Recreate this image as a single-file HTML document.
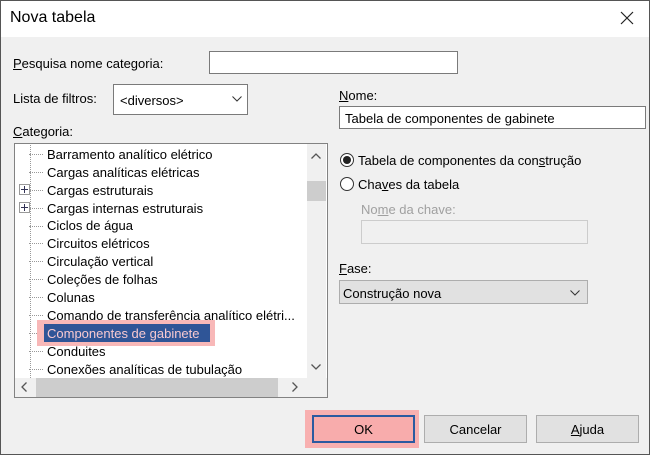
<!DOCTYPE html>
<html><head><meta charset="utf-8"><style>
*{box-sizing:border-box;margin:0;padding:0}
body{width:650px;height:455px;overflow:hidden;font-family:"Liberation Sans",sans-serif;font-size:13px;color:#000;background:#f0f0f0;position:relative}
.win{position:absolute;left:0;top:0;width:650px;height:455px;background:#f0f0f0}
.frame{position:absolute;left:0;top:0;width:650px;height:455px;border:1px solid #555;z-index:9}
.title{position:absolute;left:0;top:0;width:650px;height:37px;background:#fff}
.abs{position:absolute;white-space:nowrap}
.inp{position:absolute;background:#fff;border:1px solid #7a7a7a}
u{text-decoration:underline}
.row{position:absolute;left:47px;height:18px;line-height:18px;font-size:13px}
.dot{position:absolute;left:29px;width:14px;border-top:1px dotted #999}
.plus{position:absolute;left:19px;width:11px;height:11px;border:1px solid #999;background:#fff}
.plus:before{content:"";position:absolute;left:1px;top:4px;width:7px;height:1px;background:#335}
.plus:after{content:"";position:absolute;left:4px;top:1px;width:1px;height:7px;background:#335}
.btn{position:absolute;top:415px;height:28px;border:1px solid #adadad;background:#e1e1e1;text-align:center;line-height:27px;font-size:13px}
.radio{position:absolute;width:14px;height:14px;border-radius:50%;border:1px solid #333;background:#fff}
</style></head><body>
<div class="win">
<div class="title"></div>
<div class="abs" style="left:10px;top:9px;font-size:16px">Nova tabela</div>
<svg class="abs" style="left:620px;top:11px" width="14" height="14"><path d="M1 1L13 13M13 1L1 13" stroke="#222" stroke-width="1.2"/></svg>

<div class="abs" style="left:13px;top:56px"><u>P</u>esquisa nome categoria:</div>
<div class="inp" style="left:209px;top:51px;width:249px;height:23px"></div>
<div class="abs" style="left:13px;top:91px">Lista de filtros:</div>
<div class="inp" style="left:113px;top:84px;width:135px;height:31px"></div>
<div class="abs" style="left:120px;top:93px">&lt;diversos&gt;</div>
<svg class="abs" style="left:232px;top:96px" width="10" height="6"><path d="M0.5 0.5L5 5L9.5 0.5" stroke="#333" fill="none"/></svg>
<div class="abs" style="left:13px;top:124px"><u>C</u>ategoria:</div>

<div class="inp" style="left:14px;top:143px;width:314px;height:255px;border-color:#828282"></div>
<div class="abs" style="left:30px;top:145px;width:0;height:233px;border-left:1px dotted #999"></div>
<div class="dot" style="top:154px"></div><div class="row" style="top:146px">Barramento analítico elétrico</div>
<div class="dot" style="top:172px"></div><div class="row" style="top:164px">Cargas analíticas elétricas</div>
<div class="dot" style="top:190px"></div><div class="plus" style="top:184px"></div><div class="row" style="top:182px">Cargas estruturais</div>
<div class="dot" style="top:208px"></div><div class="plus" style="top:202px"></div><div class="row" style="top:200px">Cargas internas estruturais</div>
<div class="dot" style="top:226px"></div><div class="row" style="top:217px">Ciclos de água</div>
<div class="dot" style="top:243px"></div><div class="row" style="top:235px">Circuitos elétricos</div>
<div class="dot" style="top:261px"></div><div class="row" style="top:253px">Circulação vertical</div>
<div class="dot" style="top:279px"></div><div class="row" style="top:271px">Coleções de folhas</div>
<div class="dot" style="top:297px"></div><div class="row" style="top:289px">Colunas</div>
<div class="dot" style="top:315px"></div><div class="row" style="top:307px">Comando de transferência analítico elétri...</div>
<div class="dot" style="top:333px"></div>
<div class="abs" style="left:37px;top:320px;width:178px;height:26px;background:#f8b8b8"></div>
<div class="abs" style="left:44px;top:324px;width:166px;height:18px;background:#2f5597"></div>
<div class="row" style="top:325px;color:#f7c9d0">Componentes de gabinete</div>
<div class="dot" style="top:351px"></div><div class="row" style="top:343px">Conduites</div>
<div class="dot" style="top:369px"></div><div class="row" style="top:361px">Conexões analíticas de tubulação</div>

<div class="abs" style="left:307px;top:144px;width:19px;height:234px;background:#f0f0f0"></div>
<div class="abs" style="left:307px;top:181px;width:19px;height:20px;background:#cdcdcd"></div>
<svg class="abs" style="left:311px;top:153px" width="10" height="6"><path d="M0.5 5.5L5 1L9.5 5.5" stroke="#555" fill="none" stroke-width="1.3"/></svg>
<svg class="abs" style="left:311px;top:364px" width="10" height="6"><path d="M0.5 0.5L5 5L9.5 0.5" stroke="#555" fill="none" stroke-width="1.3"/></svg>
<div class="abs" style="left:15px;top:378px;width:292px;height:19px;background:#f0f0f0"></div>
<div class="abs" style="left:36px;top:378px;width:242px;height:19px;background:#cdcdcd"></div>
<div class="abs" style="left:307px;top:378px;width:20px;height:19px;background:#f0f0f0"></div>
<svg class="abs" style="left:21px;top:382px" width="6" height="10"><path d="M5.5 0.5L1 5L5.5 9.5" stroke="#555" fill="none" stroke-width="1.3"/></svg>
<svg class="abs" style="left:292px;top:382px" width="6" height="10"><path d="M0.5 0.5L5 5L0.5 9.5" stroke="#555" fill="none" stroke-width="1.3"/></svg>

<div class="abs" style="left:339px;top:88px"><u>N</u>ome:</div>
<div class="inp" style="left:339px;top:106px;width:307px;height:23px"></div>
<div class="abs" style="left:345px;top:111px">Tabela de componentes de gabinete</div>

<div class="radio" style="left:340px;top:153px"></div>
<div class="abs" style="left:343px;top:156px;width:8px;height:8px;border-radius:50%;background:#222"></div>
<div class="abs" style="left:358px;top:153px">Tabela de componentes da con<u>s</u>trução</div>
<div class="radio" style="left:340px;top:177px"></div>
<div class="abs" style="left:358px;top:177px">Cha<u>v</u>es da tabela</div>
<div class="abs" style="left:361px;top:202px;color:#a0a0a0">No<u>m</u>e da chave:</div>
<div class="abs" style="left:361px;top:220px;width:227px;height:24px;border:1px solid #ccc;background:#f0f0f0"></div>
<div class="abs" style="left:339px;top:261px"><u>F</u>ase:</div>
<div class="abs" style="left:339px;top:280px;width:249px;height:24px;border:1px solid #adadad;background:#e1e1e1"></div>
<div class="abs" style="left:343px;top:286px">Construção nova</div>
<svg class="abs" style="left:570px;top:290px" width="10" height="6"><path d="M0.5 0.5L5 5L9.5 0.5" stroke="#333" fill="none"/></svg>

<div class="abs" style="left:305px;top:410px;width:114px;height:38px;background:#f8b0b0"></div>
<div class="btn" style="left:312px;width:103px;background:#f8acac;border:2px solid #2b5aa0;line-height:25px">OK</div>
<div class="btn" style="left:424px;width:103px">Cancelar</div>
<div class="btn" style="left:536px;width:103px"><u>A</u>juda</div>
</div>
<div class="frame"></div>
</body></html>
